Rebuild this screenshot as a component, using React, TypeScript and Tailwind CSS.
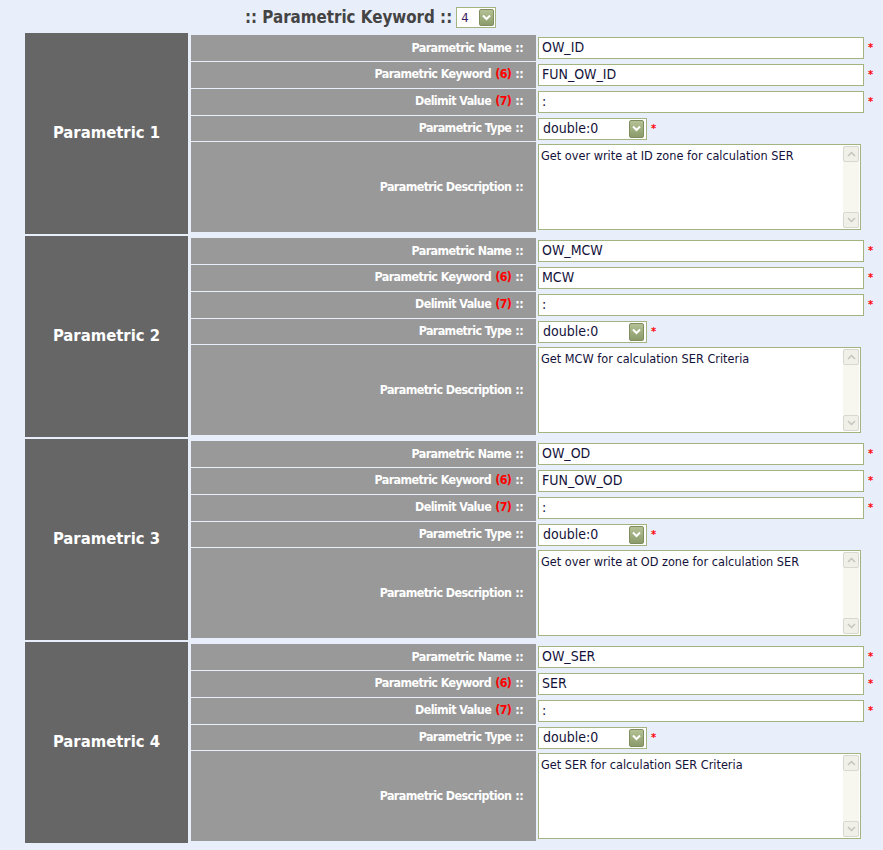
import React from "react";

type Param = { name: string; keyword: string; delimit: string; type: string; desc: string };

const params: Param[] = [
  { name: "OW_ID", keyword: "FUN_OW_ID", delimit: ":", type: "double:0", desc: "Get over write at ID zone for calculation SER" },
  { name: "OW_MCW", keyword: "MCW", delimit: ":", type: "double:0", desc: "Get MCW for calculation SER Criteria" },
  { name: "OW_OD", keyword: "FUN_OW_OD", delimit: ":", type: "double:0", desc: "Get over write at OD zone for calculation SER" },
  { name: "OW_SER", keyword: "SER", delimit: ":", type: "double:0", desc: "Get SER for calculation SER Criteria" },
];

const font = "font-['DejaVu_Sans_Condensed','DejaVu_Sans',sans-serif]";

function DropButton({ h = "h-[18px]" }: { h?: string }) {
  return (
    <span
      className={`flex w-[15px] ${h} items-center justify-center rounded-[2px] border border-[#7f8d5f] bg-gradient-to-b from-[#b3c195] to-[#8c9b6a]`}
    >
      <svg width="9" height="7" viewBox="0 0 9 7">
        <path d="M1 1.5 L4.5 5 L8 1.5" fill="none" stroke="#fff" strokeWidth="2" />
      </svg>
    </span>
  );
}

function Star() {
  return <span className="ml-[4px] text-[11px] font-bold leading-none text-[#ff0000]">*</span>;
}

function Label({ label, num }: { label: string; num?: string }) {
  return (
    <>
      {label}
      {num && <span className="ml-[4px] text-[#ff0000]">({num})</span>}
      <span className="ml-[4px]">::</span>
    </>
  );
}

function Row({ label, num, children }: { label: string; num?: string; children: React.ReactNode }) {
  return (
    <div className="flex h-[26px]">
      <div className="flex w-[345px] items-center justify-end bg-[#999999] pr-[13px] text-[12.4px] font-bold tracking-[-0.6px] text-white">
        <Label label={label} num={num} />
      </div>
      <div className="flex items-center pl-[2px]">{children}</div>
    </div>
  );
}

function TextInput({ value }: { value: string }) {
  return (
    <div className="flex h-[22px] w-[326px] items-center border border-[#a3b480] bg-white px-[3px] text-[14px] text-[#14123a]">
      {value}
    </div>
  );
}

function Block({ p, idx }: { p: Param; idx: number }) {
  return (
    <div className="flex h-[201px] gap-[3px]">
      <div className="flex w-[163px] items-center justify-center bg-[#666666] text-[16.5px] font-bold text-white">
        Parametric {idx}
      </div>
      <div className="flex flex-col gap-[1px] py-[2px]">
        <Row label="Parametric Name">
          <TextInput value={p.name} />
          <Star />
        </Row>
        <Row label="Parametric Keyword" num="6">
          <TextInput value={p.keyword} />
          <Star />
        </Row>
        <Row label="Delimit Value" num="7">
          <TextInput value={p.delimit} />
          <Star />
        </Row>
        <Row label="Parametric Type">
          <div className="flex h-[22px] w-[109px] items-center justify-between border border-[#a3b480] bg-white pl-[4px] pr-[2px] text-[14px] text-[#14123a]">
            {p.type}
            <DropButton />
          </div>
          <Star />
        </Row>
        <div className="flex h-[90px]">
          <div className="flex w-[345px] items-center justify-end bg-[#999999] pr-[13px] text-[12.4px] font-bold tracking-[-0.6px] text-white">
            <Label label="Parametric Description" />
          </div>
          <div className="flex items-center pl-[2px]">
            <div className="flex h-[86px] w-[323px] border border-[#a3b480] bg-white">
              <div className="flex-1 px-[2px] pt-[3px] text-[12.6px] leading-[15px] text-[#14123a]">{p.desc}</div>
              <div className="my-[1px] mr-[1px] flex w-[16px] flex-col justify-between bg-[#f7f7ef]">
                <span className="flex h-[16px] items-center justify-center rounded-[2px] border border-[#d8d8d0] bg-[#f0f0e8]">
                  <svg width="9" height="6" viewBox="0 0 9 6">
                    <path d="M1 5 L4.5 1.5 L8 5" fill="none" stroke="#c4c4bc" strokeWidth="1.5" />
                  </svg>
                </span>
                <span className="flex h-[16px] items-center justify-center rounded-[2px] border border-[#d8d8d0] bg-[#f0f0e8]">
                  <svg width="9" height="6" viewBox="0 0 9 6">
                    <path d="M1 1 L4.5 4.5 L8 1" fill="none" stroke="#c4c4bc" strokeWidth="1.5" />
                  </svg>
                </span>
              </div>
            </div>
          </div>
        </div>
      </div>
    </div>
  );
}

export default function App() {
  return (
    <div className={`min-h-[850px] bg-[#e8eefa] ${font}`}>
      <div className="flex h-[33px] items-center pl-[245px] pt-[2px]">
        <span className="text-[16.8px] font-bold text-[#444444]">:: Parametric Keyword ::</span>
        <div className="ml-[4px] flex h-[21px] w-[40px] items-center justify-between border border-[#a3b480] bg-white pl-[4px] pr-[1px] text-[13px] text-[#3a1a60]">
          4
          <DropButton h="h-[17px]" />
        </div>
      </div>
      <div className="ml-[25px] flex flex-col gap-[2px]">
        {params.map((p, i) => (
          <Block key={i} p={p} idx={i + 1} />
        ))}
      </div>
    </div>
  );
}
